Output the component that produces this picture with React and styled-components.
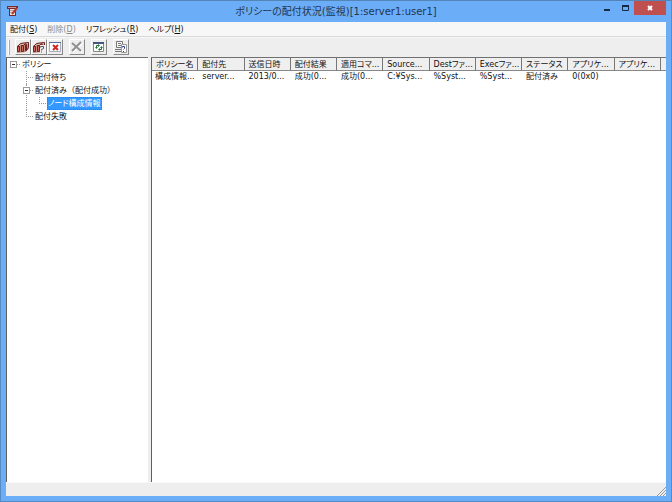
import React, { useState } from "react";
import styled, { createGlobalStyle, css } from "styled-components";

const GlobalStyle = createGlobalStyle`
  * {
    box-sizing: border-box;
  }

  body {
    margin: 0;
    font-family: "DejaVu Sans", "Noto Sans CJK JP", sans-serif;
    font-size: 8px;
    line-height: 12px;
    font-feature-settings: "palt";
    color: #111;
  }

  button {
    font: inherit;
    font-feature-settings: inherit;
    color: inherit;
    padding: 0;
    border: 0;
    background: none;
  }
`;

// ======================
// Window frame
// ======================
const Window = styled.div`
  display: flex;
  flex-direction: column;
  min-height: 100vh;
  padding: 0 5px 5px;
  background: #6badf6;
  border: 1px solid #568cc6;
  border-top-color: #5485b8;
`;

const TitleBar = styled.header`
  display: grid;
  grid-template-columns: 90px 1fr 90px;
  height: 21px;
`;

const AppIcon = styled.svg`
  width: 12px;
  height: 12px;
  margin: 4px 0 0 1px;
`;

const Title = styled.h1`
  margin: 0;
  font-size: 10px;
  font-weight: 400;
  line-height: 22px;
  text-align: center;
  white-space: nowrap;
  color: #1f3550;
`;

const WindowButtons = styled.div`
  display: flex;
  justify-content: flex-end;
  align-items: flex-start;
`;

const WindowButton = styled.button`
  display: flex;
  align-items: center;
  justify-content: center;
  width: ${({ $close }) => ($close ? 32 : 18)}px;
  height: 14px;
  background: ${({ $close }) => ($close ? "#c0504f" : "transparent")};
`;

const Client = styled.div`
  flex: 1;
  display: flex;
  flex-direction: column;
  background: #eee;
`;

// ======================
// Menu and toolbar
// ======================
const MenuBar = styled.nav`
  display: flex;
  gap: 10px;
  height: 15px;
  padding: 1px 4px 0;
  background: #f7f7f7;
  border-bottom: 1px solid #d8d8d8;
`;

const MenuButton = styled.button`
  white-space: nowrap;

  &:disabled {
    color: #8c8c8c;
  }
`;

const ToolBar = styled.div`
  display: flex;
  align-items: center;
  height: 20px;
  padding: 0 0 1px 2px;
  border-top: 1px solid #f8f8f8;
`;

const Grip = styled.span`
  width: 2px;
  height: 15px;
  margin-right: 5px;
  border-left: 1px solid #fff;
  border-right: 1px solid #aaa;
`;

const ToolGroup = styled.div`
  display: flex;
  margin-right: 6px;
`;

const ToolButton = styled.button`
  width: 16px;
  height: 16px;
  border: 1px solid;
  border-color: #fff #888 #888 #fff;

  svg {
    display: block;
    width: 14px;
    height: 14px;
  }
`;

// ======================
// Panes
// ======================
const Panes = styled.main`
  flex: 1;
  display: grid;
  grid-template-columns: 142px 1fr;
  gap: 3px;
`;

const Pane = styled.section`
  min-width: 0;
  overflow: hidden;
  background: #fff;
  border-top: 1px solid #707070;
  border-left: 1px solid #606060;
`;

const TreeList = styled.ul`
  list-style: none;
  margin: 0;
  padding: ${({ $root }) => ($root ? "0" : "0 0 0 13px")};
`;

const TreeItem = styled.li`
  position: relative;

  ${({ $branch }) =>
    $branch &&
    css`
      &::before {
        content: "";
        position: absolute;
        top: 0;
        left: 6px;
        height: ${$branch === "last" ? "7px" : "100%"};
        border-left: 1px dotted #999;
      }
    `}
`;

const TreeRow = styled.div`
  position: relative;
  display: flex;
  align-items: center;
  height: 13px;

  &::before {
    content: "";
    position: absolute;
    top: 6px;
    left: 6px;
    width: 7px;
    border-top: 1px dotted #999;
  }
`;

const Toggle = styled.button`
  position: relative;
  flex: none;
  width: 7px;
  height: 7px;
  margin: 0 4px 0 3px;
  background: #fff;
  border: 1px solid #999;

  svg {
    display: block;
    width: 5px;
    height: 5px;
  }
`;

const Spacer = styled.span`
  flex: none;
  width: 14px;
`;

const NodeButton = styled.button`
  height: 13px;
  padding: 0 1px;
  line-height: 11px;
  white-space: nowrap;
  border: 1px solid transparent;
  border-width: 1px 0;
  font-feature-settings: ${({ $fullWidth }) => ($fullWidth ? "normal" : "inherit")};

  ${({ $selected }) =>
    $selected &&
    css`
      color: #fff;
      background: #3399ff;
      border: 1px dotted #a8622c;
      padding: 0;
    `}
`;

const Table = styled.table`
  width: 100%;
  table-layout: fixed;
  border-collapse: separate;
  border-spacing: 0;
`;

const HeadCell = styled.th`
  height: 13px;
  padding: 1px 0 0 4px;
  font-weight: 400;
  line-height: 11px;
  text-align: left;
  white-space: nowrap;
  background: #efefef;
  border-right: 1px solid #777;
  border-bottom: 1px solid #888;

  &:last-child {
    border-right: 0;
  }
`;

const Cell = styled.td`
  padding: 0 0 0 4px;
  white-space: nowrap;

  &:first-child {
    padding-left: 3px;
  }
`;

const StatusBar = styled.footer`
  display: flex;
  justify-content: flex-end;
  align-items: flex-end;
  height: 14px;
  border-top: 1px solid #f8f8f8;

  svg {
    width: 9px;
    height: 9px;
  }
`;

// ======================
// Icons
// ======================
const Books = () => (
  <>
    <path d="M1 6 5 3l8-1v6l-3 4-9 1z" fill="#c08a80" />
    <path d="m1 6 4-3h1L3 6zM5 5l3-3h2L7 5zM9 5l3-3h1l-2 3z" fill="#e6c4ba" />
    <path d="M1.500 6.500h2v5h-2zM5.500 5.500h2v6h-2zM9.500 4.500h1v6h-1z" fill="#d3665a" stroke="#6b2622" />
    <path d="m1.500 6.500 3-3 8-1v5l-2 3M7.500 5.500l2-2" fill="none" stroke="#6b2622" />
  </>
);

const BooksIcon = () => (
  <svg viewBox="0 0 14 14">
    <Books />
  </svg>
);

const BooksQueryIcon = () => (
  <svg viewBox="0 0 14 14">
    <Books />
    <path d="M8 5h5v5l-1 3H8z" fill="#eee" />
    <path d="M8.500 7.500v-1h3v2l-2 1v1M9.500 11.500v1" stroke="#555" fill="none" />
  </svg>
);

const StopIcon = () => (
  <svg viewBox="0 0 14 14">
    <path d="M1.500 2.500h11v9h-11z" fill="#fff" stroke="#a3acc0" />
    <path d="M1 2.500h12" stroke="#536b96" />
    <path d="m5 5 5 5M10 5l-5 5" stroke="#cf2822" strokeWidth="2" />
  </svg>
);

const DeleteIcon = () => (
  <svg viewBox="0 0 14 14">
    <path d="m3 4 9 8M12 3l-9 9" stroke="#fff" strokeWidth="2" />
    <path d="m2 3 9 8M11 2l-9 9" stroke="#909090" strokeWidth="2" />
  </svg>
);

const RefreshIcon = () => (
  <svg viewBox="0 0 14 14">
    <path d="M1.500 2.500h10v9h-10z" fill="#fff" stroke="#888" />
    <path d="M1 3h11" stroke="#44567f" strokeWidth="2" />
    <path d="M4.500 7V5.500H6M9.500 8v1.500H8" stroke="#24713a" fill="none" />
    <path d="m6 4 2 1.500L6 7zM8 8 6 9.500 8 11zM3 7h3L4.500 9zM8 8l1.500-2L11 8z" fill="#24713a" />
  </svg>
);

const PropertyIcon = () => (
  <svg viewBox="0 0 14 14">
    <path d="M2.500 1.500h6v6h-6z" fill="#f8f8f8" stroke="#777" />
    <path d="M4 3.500h3M4 5.500h3M1 9.500h6M1 11.500h6" stroke="#777" />
    <path d="M7.500 4.500h5v8h-5z" fill="#fff" stroke="#999" />
    <path d="M8.500 7.500v-1h2v2l-1 1M9.500 11v1" stroke="#263f8c" fill="none" />
  </svg>
);

// ======================
// Data
// ======================
const MENUS = [
  { label: "配付", hotkey: "S" },
  { label: "削除", hotkey: "D", disabled: true },
  { label: "リフレッシュ", hotkey: "R" },
  { label: "ヘルプ", hotkey: "H" },
];

const TOOLS = [
  [
    { label: "配付", Icon: BooksIcon },
    { label: "配付状況", Icon: BooksQueryIcon },
    { label: "配付の中止", Icon: StopIcon },
  ],
  [{ label: "削除", Icon: DeleteIcon, disabled: true }],
  [{ label: "リフレッシュ", Icon: RefreshIcon }],
  [{ label: "ヘルプ", Icon: PropertyIcon }],
];

const TREE = {
  label: "ポリシー",
  children: [
    { label: "配付待ち" },
    {
      label: "配付済み（配付成功）",
      fullWidth: true,
      children: [{ label: "ノード構成情報" }],
    },
    { label: "配付失敗" },
  ],
};

const COLUMNS = [
  ["ポリシー名", "構成情報..."],
  ["配付先", "server..."],
  ["送信日時", "2013/0..."],
  ["配付結果", "成功(0..."],
  ["適用コマ...", "成功(0..."],
  ["Source...", "C:¥Sys..."],
  ["Destファ...", "%Syst..."],
  ["Execファ...", "%Syst..."],
  ["ステータス", "配付済み"],
  ["アプリケ...", "0(0x0)"],
  ["アプリケ...", ""],
  ["", ""],
];

function TreeNode({ node, branch, selected, onSelect }) {
  const [open, setOpen] = useState(true);
  const children = node.children || [];

  return (
    <TreeItem $branch={branch}>
      <TreeRow>
        {children.length > 0 ? (
          <Toggle aria-label={node.label} aria-expanded={open} onClick={() => setOpen(!open)}>
            <svg viewBox="0 0 5 5">
              <path d={open ? "M1 2.500h3" : "M1 2.500h3M2.500 1v3"} stroke="#333" />
            </svg>
          </Toggle>
        ) : (
          <Spacer />
        )}
        <NodeButton
          $selected={selected === node.label}
          $fullWidth={node.fullWidth}
          onClick={() => onSelect(node.label)}
        >
          {node.label}
        </NodeButton>
      </TreeRow>
      {open && children.length > 0 && (
        <TreeList>
          {children.map((child, i) => (
            <TreeNode
              key={child.label}
              node={child}
              branch={i === children.length - 1 ? "last" : "middle"}
              selected={selected}
              onSelect={onSelect}
            />
          ))}
        </TreeList>
      )}
    </TreeItem>
  );
}

export default function App() {
  const [selected, setSelected] = useState("ノード構成情報");

  return (
    <Window>
      <GlobalStyle />
      <TitleBar>
        <AppIcon viewBox="0 0 12 12">
          <path d="M0 1h11v2H9v8H2V4H0z" fill="#702c30" />
          <path d="M3 4h5v6H3z" fill="#eedbd7" />
          <path d="M1 2.500h8M3 5.500h4M3 7.500h4" stroke="#c9a09b" />
          <path d="m5 9 5-6" stroke="#b23a31" strokeWidth="2" />
        </AppIcon>
        <Title>ポリシーの配付状況(監視)[1:server1:user1]</Title>
        <WindowButtons>
          <WindowButton aria-label="最小化">
            <svg width="6" height="8" viewBox="0 0 6 8">
              <path d="M0 6h6" stroke="#152b45" strokeWidth="2" />
            </svg>
          </WindowButton>
          <WindowButton aria-label="最大化">
            <svg width="7" height="7" viewBox="0 0 7 7">
              <path d="M.5 1.500h6v4h-6z" fill="none" stroke="#152b45" />
              <path d="M0 1h7" stroke="#152b45" strokeWidth="2" />
            </svg>
          </WindowButton>
          <WindowButton $close aria-label="閉じる">
            <svg width="6" height="6" viewBox="0 0 6 6">
              <path d="m1 1 4 4M5 1 1 5" stroke="#fff" strokeWidth="2" />
            </svg>
          </WindowButton>
        </WindowButtons>
      </TitleBar>

      <Client>
        <MenuBar>
          {MENUS.map((menu) => (
            <MenuButton key={menu.label} disabled={menu.disabled}>
              {menu.label}(<u>{menu.hotkey}</u>)
            </MenuButton>
          ))}
        </MenuBar>
        <ToolBar>
          <Grip />
          {TOOLS.map((group) => (
            <ToolGroup key={group[0].label}>
              {group.map(({ label, Icon, disabled }) => (
                <ToolButton key={label} aria-label={label} disabled={disabled}>
                  <Icon />
                </ToolButton>
              ))}
            </ToolGroup>
          ))}
        </ToolBar>

        <Panes>
          <Pane>
            <TreeList $root>
              <TreeNode node={TREE} selected={selected} onSelect={setSelected} />
            </TreeList>
          </Pane>
          <Pane>
            <Table>
              <colgroup>
                {COLUMNS.map((column, i) => (
                  <col key={i} width={i === COLUMNS.length - 1 ? "1%" : "9%"} />
                ))}
              </colgroup>
              <thead>
                <tr>
                  {COLUMNS.map(([name], i) => (
                    <HeadCell key={i}>{name}</HeadCell>
                  ))}
                </tr>
              </thead>
              <tbody>
                <tr>
                  {COLUMNS.map(([, value], i) => (
                    <Cell key={i}>{value}</Cell>
                  ))}
                </tr>
              </tbody>
            </Table>
          </Pane>
        </Panes>

        <StatusBar>
          <svg viewBox="0 0 9 9">
            <path d="m0 9 9-9M3 9l6-6M6 9l3-3" stroke="#999" />
          </svg>
        </StatusBar>
      </Client>
    </Window>
  );
}
